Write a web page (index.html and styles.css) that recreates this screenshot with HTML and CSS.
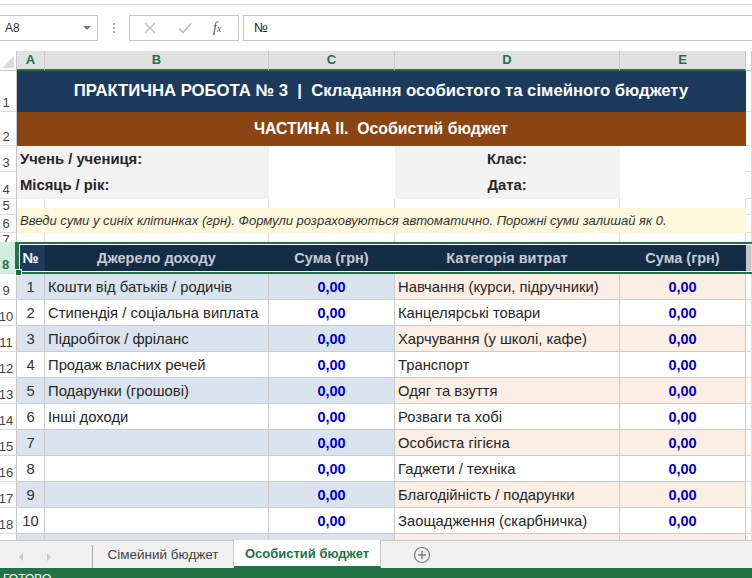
FILE: index.html
```html
<!DOCTYPE html>
<html lang="uk">
<head>
  <meta charset="UTF-8" />
  <title>Особистий бюджет</title>
  <link rel="stylesheet" href="styles.css">
</head>
<body>
  <div class="top-strip"></div>

  <div class="formula-bar">
    <div class="name-box">A8<span class="caret"></span></div>
    <div class="fb-dots"><i></i><i></i><i></i></div>
    <div class="fb-buttons">
      <svg width="12" height="12" viewBox="0 0 12 12"><path d="M1 1 L11 11 M11 1 L1 11" stroke="#bdbdbd" stroke-width="1.3" fill="none"/></svg>
      <svg width="14" height="12" viewBox="0 0 14 12"><path d="M1 6.5 L5 10.5 L13 1.5" stroke="#bdbdbd" stroke-width="1.6" fill="none"/></svg>
      <span class="fx">f<small>x</small></span>
    </div>
    <div class="fb-input">№</div>
  </div>

  <div class="sheet">
    <div class="row col-heads">
      <div class="corner"><span></span></div>
      <div class="ch">A</div>
      <div class="ch">B</div>
      <div class="ch">C</div>
      <div class="ch">D</div>
      <div class="ch">E</div>
      <div class="ch ch-off"></div>
    </div>

    <div class="row r1">
      <div class="rh">1</div>
      <div class="c title">ПРАКТИЧНА РОБОТА № 3  |  Складання особистого та сімейного бюджету</div>
      <div class="c"></div>
    </div>

    <div class="row r2">
      <div class="rh">2</div>
      <div class="c part">ЧАСТИНА II.  Особистий бюджет</div>
      <div class="c"></div>
    </div>

    <div class="row r3">
      <div class="rh">3</div>
      <div class="c label-cell">Учень / учениця:</div>
      <div class="c blank"></div>
      <div class="c label-mid">Клас:</div>
      <div class="c blank"></div>
      <div class="c"></div>
    </div>

    <div class="row r4">
      <div class="rh">4</div>
      <div class="c label-cell">Місяць / рік:</div>
      <div class="c blank"></div>
      <div class="c label-mid">Дата:</div>
      <div class="c blank"></div>
      <div class="c"></div>
    </div>

    <div class="row r-thin">
      <div class="rh">5</div>
      <div class="c"></div><div class="c"></div><div class="c"></div><div class="c"></div><div class="c"></div><div class="c"></div>
    </div>

    <div class="row r6">
      <div class="rh">6</div>
      <div class="c note">Введи суми у синіх клітинках (грн). Формули розраховуються автоматично. Порожні суми залишай як 0.</div>
      <div class="c"></div>
    </div>

    <div class="row r-thin">
      <div class="rh">7</div>
      <div class="c"></div><div class="c"></div><div class="c"></div><div class="c"></div><div class="c"></div><div class="c"></div>
    </div>

    <div class="row r8">
      <div class="rh rh-active">8</div>
      <div class="c th th-active">№</div>
      <div class="c th">Джерело доходу</div>
      <div class="c th">Сума (грн)</div>
      <div class="c th">Категорія витрат</div>
      <div class="c th">Сума (грн)</div>
      <div class="c th-rest"></div>
      <div class="sel"></div>
    </div>

    <div class="row data odd">
      <div class="rh">9</div>
      <div class="c num">1</div><div class="c txt">Кошти від батьків / родичів</div><div class="c val">0,00</div>
      <div class="c txt exp">Навчання (курси, підручники)</div><div class="c val exp">0,00</div><div class="c"></div>
    </div>
    <div class="row data">
      <div class="rh">10</div>
      <div class="c num">2</div><div class="c txt">Стипендія / соціальна виплата</div><div class="c val">0,00</div>
      <div class="c txt exp">Канцелярські товари</div><div class="c val exp">0,00</div><div class="c"></div>
    </div>
    <div class="row data odd">
      <div class="rh">11</div>
      <div class="c num">3</div><div class="c txt">Підробіток / фріланс</div><div class="c val">0,00</div>
      <div class="c txt exp">Харчування (у школі, кафе)</div><div class="c val exp">0,00</div><div class="c"></div>
    </div>
    <div class="row data">
      <div class="rh">12</div>
      <div class="c num">4</div><div class="c txt">Продаж власних речей</div><div class="c val">0,00</div>
      <div class="c txt exp">Транспорт</div><div class="c val exp">0,00</div><div class="c"></div>
    </div>
    <div class="row data odd">
      <div class="rh">13</div>
      <div class="c num">5</div><div class="c txt">Подарунки (грошові)</div><div class="c val">0,00</div>
      <div class="c txt exp">Одяг та взуття</div><div class="c val exp">0,00</div><div class="c"></div>
    </div>
    <div class="row data">
      <div class="rh">14</div>
      <div class="c num">6</div><div class="c txt">Інші доходи</div><div class="c val">0,00</div>
      <div class="c txt exp">Розваги та хобі</div><div class="c val exp">0,00</div><div class="c"></div>
    </div>
    <div class="row data odd">
      <div class="rh">15</div>
      <div class="c num">7</div><div class="c txt"></div><div class="c val">0,00</div>
      <div class="c txt exp">Особиста гігієна</div><div class="c val exp">0,00</div><div class="c"></div>
    </div>
    <div class="row data">
      <div class="rh">16</div>
      <div class="c num">8</div><div class="c txt"></div><div class="c val">0,00</div>
      <div class="c txt exp">Гаджети / техніка</div><div class="c val exp">0,00</div><div class="c"></div>
    </div>
    <div class="row data odd">
      <div class="rh">17</div>
      <div class="c num">9</div><div class="c txt"></div><div class="c val">0,00</div>
      <div class="c txt exp">Благодійність / подарунки</div><div class="c val exp">0,00</div><div class="c"></div>
    </div>
    <div class="row data">
      <div class="rh">18</div>
      <div class="c num">10</div><div class="c txt"></div><div class="c val">0,00</div>
      <div class="c txt exp">Заощадження (скарбничка)</div><div class="c val exp">0,00</div><div class="c"></div>
    </div>
    <div class="row data odd">
      <div class="rh"></div>
      <div class="c num"></div><div class="c txt"></div><div class="c val"></div>
      <div class="c txt exp"></div><div class="c val exp"></div><div class="c"></div>
    </div>
  </div>

  <div class="tabs">
    <div class="tab-nav">
      <span class="arrow left"></span>
      <span class="arrow right"></span>
    </div>
    <div class="tab">Сімейний бюджет</div>
    <div class="tab tab-active">Особистий бюджет</div>
    <div class="tab-add">
      <svg width="18" height="18" viewBox="0 0 18 18"><circle cx="9" cy="9" r="7.5" stroke="#7a7a7a" stroke-width="1.2" fill="none"/><path d="M9 5 V13 M5 9 H13" stroke="#7a7a7a" stroke-width="1.4"/></svg>
    </div>
  </div>

  <div class="status">ГОТОВО</div>
</body>
</html>
```

FILE: styles.css
```css
html, body {
  margin: 0;
  height: 100%;
  overflow: hidden;
}

body {
  font-family: "Liberation Sans", Arial, sans-serif;
  font-size: 13px;
  color: #262626;
  background: #fff;
}

/* ribbon edge + formula bar */
.top-strip {
  height: 4px;
  border-bottom: 1px solid #d4d4d4;
}

.formula-bar {
  display: flex;
  height: 26px;
  margin: 10px 0 10px;
}

.name-box {
  position: relative;
  width: 98px;
  box-sizing: border-box;
  border: 1px solid #c6c6c6;
  border-left: none;
  padding-left: 5px;
  line-height: 24px;
  font-size: 12px;
  color: #333;
}

.caret {
  position: absolute;
  right: 6px;
  top: 10px;
  border-left: 4px solid transparent;
  border-right: 4px solid transparent;
  border-top: 4px solid #777;
}

.fb-dots {
  width: 31px;
  display: flex;
  flex-direction: column;
  align-items: center;
  justify-content: center;
  gap: 2px;
}

.fb-dots i {
  width: 2px;
  height: 2px;
  background: #a6a6a6;
}

.fb-buttons {
  width: 110px;
  box-sizing: border-box;
  border: 1px solid #c6c6c6;
  display: flex;
  align-items: center;
  padding-left: 14px;
  gap: 22px;
}

.fx {
  font-family: "Liberation Serif", serif;
  font-style: italic;
  font-size: 14px;
  color: #555;
  margin-left: -1px;
}

.fx small {
  font-size: 10px;
}

.fb-input {
  flex: 1;
  margin-left: 4px;
  box-sizing: border-box;
  border: 1px solid #c6c6c6;
  border-right: none;
  padding-left: 10px;
  line-height: 24px;
  font-size: 13px;
  color: #222;
}

/* sheet grid */
.sheet {
  height: 489px;
  overflow: hidden;
}

.row {
  display: grid;
  grid-template-columns: 17px 28px 224px 126px 225px 126px 1fr;
  height: 26px;
}

.row > div {
  box-sizing: border-box;
  min-width: 0;
  overflow: hidden;
  white-space: pre;
}

.c {
  border-right: 1px solid #dcdcdc;
  border-bottom: 1px solid #dcdcdc;
  display: flex;
  align-items: center;
}

.rh {
  border-right: 1px solid #c6c6c6;
  border-bottom: 1px solid #dcdcdc;
  display: flex;
  align-items: flex-end;
  justify-content: center;
  padding-right: 4px;
  padding-bottom: 1px;
  font-size: 13px;
  line-height: 14px;
  color: #444;
  overflow: visible !important;
}

.col-heads {
  height: 20px;
}

.corner {
  position: relative;
  background: #fff;
  border-right: 1px solid #c6c6c6;
  border-bottom: 1px solid #c6c6c6;
}

.corner span {
  position: absolute;
  right: 2px;
  bottom: 2px;
  border-left: 12px solid transparent;
  border-bottom: 12px solid #dadada;
}

.ch {
  background: #e1e1e1;
  border-right: 1px solid #c9c9c9;
  border-bottom: 2px solid #217346;
  color: #217346;
  font-weight: bold;
  font-size: 13px;
  text-align: center;
  line-height: 18px;
}

.ch-off {
  background: #fff;
  border-bottom: 1px solid #c6c6c6;
}

/* title rows */
.r1 { height: 41px; }
.r2 { height: 34px; }
.r4 { height: 27px; }
.r6 { height: 25px; }
.r-thin { height: 9px; }

.title {
  grid-column: span 5;
  background: #1c3a5c;
  border-color: #1c3a5c;
  color: #fff;
  font-weight: bold;
  font-size: 16.7px;
  justify-content: center;
}

.part {
  grid-column: span 5;
  background: #8b4513;
  border-color: #8b4513;
  color: #fff;
  font-weight: bold;
  font-size: 15.8px;
  justify-content: center;
}

.label-cell {
  grid-column: span 2;
  background: #f2f2f2;
  border-color: #f2f2f2;
  font-weight: bold;
  font-size: 14.8px;
  padding-left: 3px;
}

.label-mid {
  background: #f2f2f2;
  border-color: #f2f2f2;
  font-weight: bold;
  font-size: 14.8px;
  justify-content: center;
}

.blank {
  border-color: #fff;
}

.note {
  grid-column: span 5;
  background: #fff8dc;
  border-color: #fff8dc;
  font-style: italic;
  font-size: 13px;
  padding-left: 3px;
  color: #333;
}

/* table header, selected */
.r8 {
  height: 32px;
  position: relative;
}

.rh-active {
  background: #d3ecdc;
  color: #217346;
  font-weight: bold;
  border-right: 2px solid #217346;
}

.th {
  background: #152c45;
  border-color: #152c45;
  color: #c5cbd3;
  font-weight: bold;
  font-size: 14.5px;
  justify-content: center;
}

.th-active {
  background: #1c3a5c;
  border-color: #1c3a5c;
  color: #fff;
}

.th-rest {
  background: #c6c6c6;
}

.sel {
  position: absolute;
  top: 0;
  bottom: 0;
  left: 17px;
  right: -4px;
  border: 2px solid #217346;
  box-shadow: inset 0 0 0 1px #fff;
  overflow: visible !important;
}

.sel::after {
  content: "";
  position: absolute;
  left: -4px;
  bottom: -4px;
  width: 5px;
  height: 5px;
  background: #217346;
  border: 1px solid #fff;
}

/* data rows */
.data .c {
  border-color: #cbcbcb;
  font-size: 14.8px;
}

.data .val {
  font-size: 14.5px;
}

.data.odd .num,
.data.odd .txt,
.data.odd .val {
  background: #d9e4ef;
}

.data.odd .exp {
  background: #fbeee4;
}

.data .c:last-child {
  background: #fff;
  border-color: #dcdcdc;
}

.num {
  justify-content: center;
  color: #333;
}

.txt {
  padding-left: 3px;
}

.val {
  justify-content: center;
  font-weight: bold;
  color: #0000cc;
}

/* sheet tabs */
.tabs {
  display: flex;
  height: 28px;
  box-sizing: border-box;
  border-top: 1px solid #c6c6c6;
  background: #f0f0f0;
  font-size: 13.5px;
}

.tab-nav {
  width: 92px;
  display: flex;
  align-items: center;
  border-right: 1px solid #a8a8a8;
  margin: 4px 0 0;
}

.arrow {
  border-top: 4px solid transparent;
  border-bottom: 4px solid transparent;
}

.arrow.left {
  margin-left: 19px;
  border-right: 4px solid #c8c8c8;
}

.arrow.right {
  margin-left: 24px;
  border-left: 4px solid #c8c8c8;
}

.tab {
  width: 140px;
  display: flex;
  align-items: center;
  justify-content: center;
  color: #444;
  border-right: 1px solid #d0d0d0;
}

.tab-active {
  width: 146px;
  margin-top: -1px;
  background: #fff;
  color: #217346;
  font-weight: bold;
  font-size: 13px;
  border-bottom: 2px solid #217346;
  border-right: 1px solid #c6c6c6;
}

.tab-add {
  display: flex;
  align-items: center;
  padding-left: 32px;
}

.status {
  height: 22px;
  background: #217346;
  color: #fff;
  font-size: 12px;
  padding: 4px 0 0 3px;
  box-sizing: border-box;
}
```
